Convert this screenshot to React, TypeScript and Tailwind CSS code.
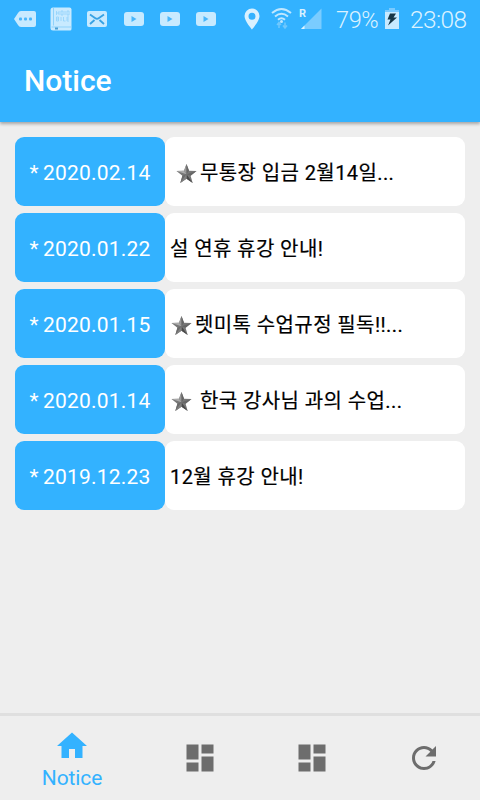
import type { ReactNode } from "react";
import { MdDashboard, MdHome, MdRefresh } from "react-icons/md";
import { clsx } from "clsx";

interface Notice {
  date: string;
  title: string;
  star?: string;
}

const NOTICES: Notice[] = [
  { date: "2020.02.14", title: "무통장 입금 2월14일...", star: "ml-[11px] mr-[3px]" },
  { date: "2020.01.22", title: "설 연휴 휴강 안내!" },
  { date: "2020.01.15", title: "렛미톡 수업규정 필독!!...", star: "ml-[6px] mr-[3px]" },
  { date: "2020.01.14", title: "한국 강사님 과의 수업...", star: "ml-[6px] mr-[8px]" },
  { date: "2019.12.23", title: "12월 휴강 안내!" },
];

function YoutubeIcon() {
  return (
    <svg width="20" height="14" viewBox="0 0 20 14">
      <rect width="20" height="14" rx="3" fill="#c8eaff" />
      <path d="M7.500 4v6l5-3z" fill="#49b6fb" />
    </svg>
  );
}

function StatusBar() {
  return (
    <div className="flex h-[38px] items-center pl-[14px] text-[#c8eaff]">
      <svg width="22" height="16" viewBox="0 0 22 16">
        <path d="M7 0h13q2 0 2 2v12q0 2-2 2H7Q5 16 4 14L0 8l4-6q1-2 3-2z" fill="currentColor" />
        <g fill="#49b6fb">
          <rect x="5" y="6.500" width="3" height="3" rx="1" />
          <rect x="10" y="6.500" width="3" height="3" rx="1" />
          <rect x="15" y="6.500" width="3" height="3" rx="1" />
        </g>
      </svg>
      <svg className="-mt-px ml-[14px]" width="22" height="24" viewBox="0 0 22 24">
        <path d="M3 .5h16.500q2 0 2 2V22q0 1.500-1.500 1.500H3q-2.500 0-2.500-2.500V3Q.5.500 3 .5z" fill="currentColor" />
        <path d="M3.500 1v17.500M1.500 20h20" stroke="#8fd2fb" fill="none" />
        <g stroke="#8fd2fb" strokeWidth="0.8" fill="none">
          <path d="M6.500 4v4M9 4v4M6.500 6H9M11 4h2v4h-2zM15 8V4M17 4v4h2V4h-2" />
          <path d="M6.500 10v4h2v-4h-2M6.500 12h2M11 10v4M13.500 10v4h2M17 14v-4h2M17 12h2M17 14h2" />
        </g>
        <path d="M5 21.500h3" stroke="#4a9fd2" strokeWidth="2" />
      </svg>
      <svg className="ml-[15px]" width="20" height="16" viewBox="0 0 20 16">
        <rect width="20" height="16" rx="2" fill="currentColor" />
        <path d="M3 3.500l5 3.500q2 1.500 4 0l5-3.500M3 13l4.500-4M17 13l-4.500-4" stroke="#37a2e4" strokeWidth="1.800" fill="none" />
      </svg>
      <div className="ml-[17px] flex gap-4">
        <YoutubeIcon />
        <YoutubeIcon />
        <YoutubeIcon />
      </div>
      <svg className="ml-[28px]" width="16" height="22" viewBox="0 0 16 22">
        <path
          d="M8 .5a7.500 7.500 0 0 0-7.500 7.500c0 5 7.500 13.500 7.500 13.500S15.500 13 15.500 8A7.500 7.500 0 0 0 8 .5zm0 4.300a3.500 3.500 0 1 1 0 7 3.500 3.500 0 0 1 0-7z"
          fill="#d9f1ff"
          fillRule="evenodd"
        />
      </svg>
      <svg className="-mt-[3px] ml-[11px]" width="21" height="22" viewBox="0 0 21 22">
        <g fill="none" stroke="#c0e7ff" strokeWidth="2">
          <path d="M1 6q9.500-8 19 0M4 9.500q6.500-5.500 13 0M7 12.700q3.500-3 7 0" />
        </g>
        <circle cx="10.500" cy="14.500" r="1.500" fill="#c0e7ff" />
        <path d="M8 21v-5M6 18l2-2.500 2 2.500M14 15.500V21M12 18.500l2 2.500 2-2.500" stroke="#70c8fd" strokeWidth="1.500" fill="none" />
      </svg>
      <svg className="-mt-[3px] ml-[7px]" width="24" height="24" viewBox="0 0 24 24">
        <path d="M22.500 2.500v20.500H2z" fill="#7accff" />
        <path d="M5.500 19.500V23H2z" fill="#e2f5ff" />
        <text x="0" y="11" fontSize="11" fontWeight="700" fontFamily="Roboto" fill="#d9f1ff">R</text>
      </svg>
      <span className="mt-[3px] ml-[13px] w-[44px] text-[23.5px] leading-none font-light tracking-[-0.4px] whitespace-nowrap text-[#dcf2ff]">79%</span>
      <svg className="-mt-[2px] ml-[5px]" width="14" height="21" viewBox="0 0 14 21">
        <path d="M4 0h6v2h4v19H0V2h4z" fill="#c8eaff" />
        <path d="M4 0h6v2h4v2H0V2h4z" fill="#79caff" />
        <path d="M5 5.500h6L8.500 9.500H12L3 17.500l2.500-6H2.500z" fill="#173646" />
      </svg>
      <span className="mt-[3px] ml-[11px] text-[24.5px] leading-none font-light tracking-[-0.6px] whitespace-nowrap text-[#dcf2ff]">23:08</span>
    </div>
  );
}

function Star({ className }: { className: string }) {
  return (
    <svg className={clsx("mt-[3px] shrink-0", className)} width="21" height="21" viewBox="0 0 21 21">
      <path d="M10.500 1l2.500 6.800 7.500.3-5.900 4.600 2.100 7.300-6.200-4.200L4.300 20l2.100-7.300L.5 8.100l7.500-.3z" fill="#777" />
      <path d="M10.500 11.200L.5 8.100l7.500-.3z" fill="#aaa" />
      <path d="M10.500 11.200V1L8 7.800z" fill="#999" />
      <path d="M10.500 11.200V1L13 7.800z" fill="#666" />
      <path d="M10.500 11.200l10-3.100-5.900 4.600z" fill="#666" />
      <path d="M10.500 11.200l6.200 8.800-6.200-4.200z" fill="#4a4a4a" />
      <path d="M10.500 11.200L4.300 20l2.100-7.300z" fill="#6a6a6a" />
      <path d="M10.500 11.200L4.300 20l6.200-4.200z" fill="#808080" />
    </svg>
  );
}

function NoticeRow({ date, title, star }: Notice) {
  return (
    <li className="flex h-[69px]">
      <div className="flex w-[150px] shrink-0 items-center justify-center rounded-[9px] bg-[#33b2ff] pt-[4px] text-[21px] tracking-[0.2px] [word-spacing:-1px] text-white">
        * {date}
      </div>
      <div className="flex flex-1 items-center rounded-[9px] bg-white text-[20px] tracking-[0.4px] whitespace-nowrap text-black">
        {star && <Star className={star} />}
        <span className={clsx("pt-[3px] [-webkit-text-stroke:0.2px_black]", !star && "ml-[5px]")}>{title}</span>
      </div>
    </li>
  );
}

function NavItem({ icon, label }: { icon: ReactNode; label?: string }) {
  return (
    <button
      className={clsx(
        "flex flex-col items-center",
        label ? "w-36 pt-[12px] text-[#33b2ff]" : "flex-1 justify-center text-[#6d6d6d]"
      )}
    >
      {icon}
      {label && <span className="mt-[1px] text-[21px] leading-[26px] tracking-[-0.1px]">{label}</span>}
    </button>
  );
}

export default function App() {
  return (
    <div className="flex h-[800px] w-[480px] flex-col overflow-hidden bg-[#eeeeee] font-[Roboto,'Noto_Sans_CJK_KR',sans-serif]">
      <header className="h-[122px] shrink-0 bg-[#33b2ff] shadow-[0_2px_3px_rgba(0,0,0,0.3)]">
        <StatusBar />
        <h1 className="pt-[20px] pl-6 text-[30px] leading-[45px] font-medium text-white">Notice</h1>
      </header>

      <ul className="flex flex-1 flex-col gap-[7px] px-[15px] pt-[15px]">
        {NOTICES.map((notice) => (
          <NoticeRow key={notice.date} {...notice} />
        ))}
      </ul>

      {/* Bottom navigation */}
      <nav className="flex h-[87px] shrink-0 border-t-[3px] border-[#dfdfdf]">
        <NavItem icon={<MdHome size={36} />} label="Notice" />
        <NavItem icon={<MdDashboard size={36} />} />
        <NavItem icon={<MdDashboard size={36} />} />
        <NavItem icon={<MdRefresh size={36} />} />
      </nav>
    </div>
  );
}
